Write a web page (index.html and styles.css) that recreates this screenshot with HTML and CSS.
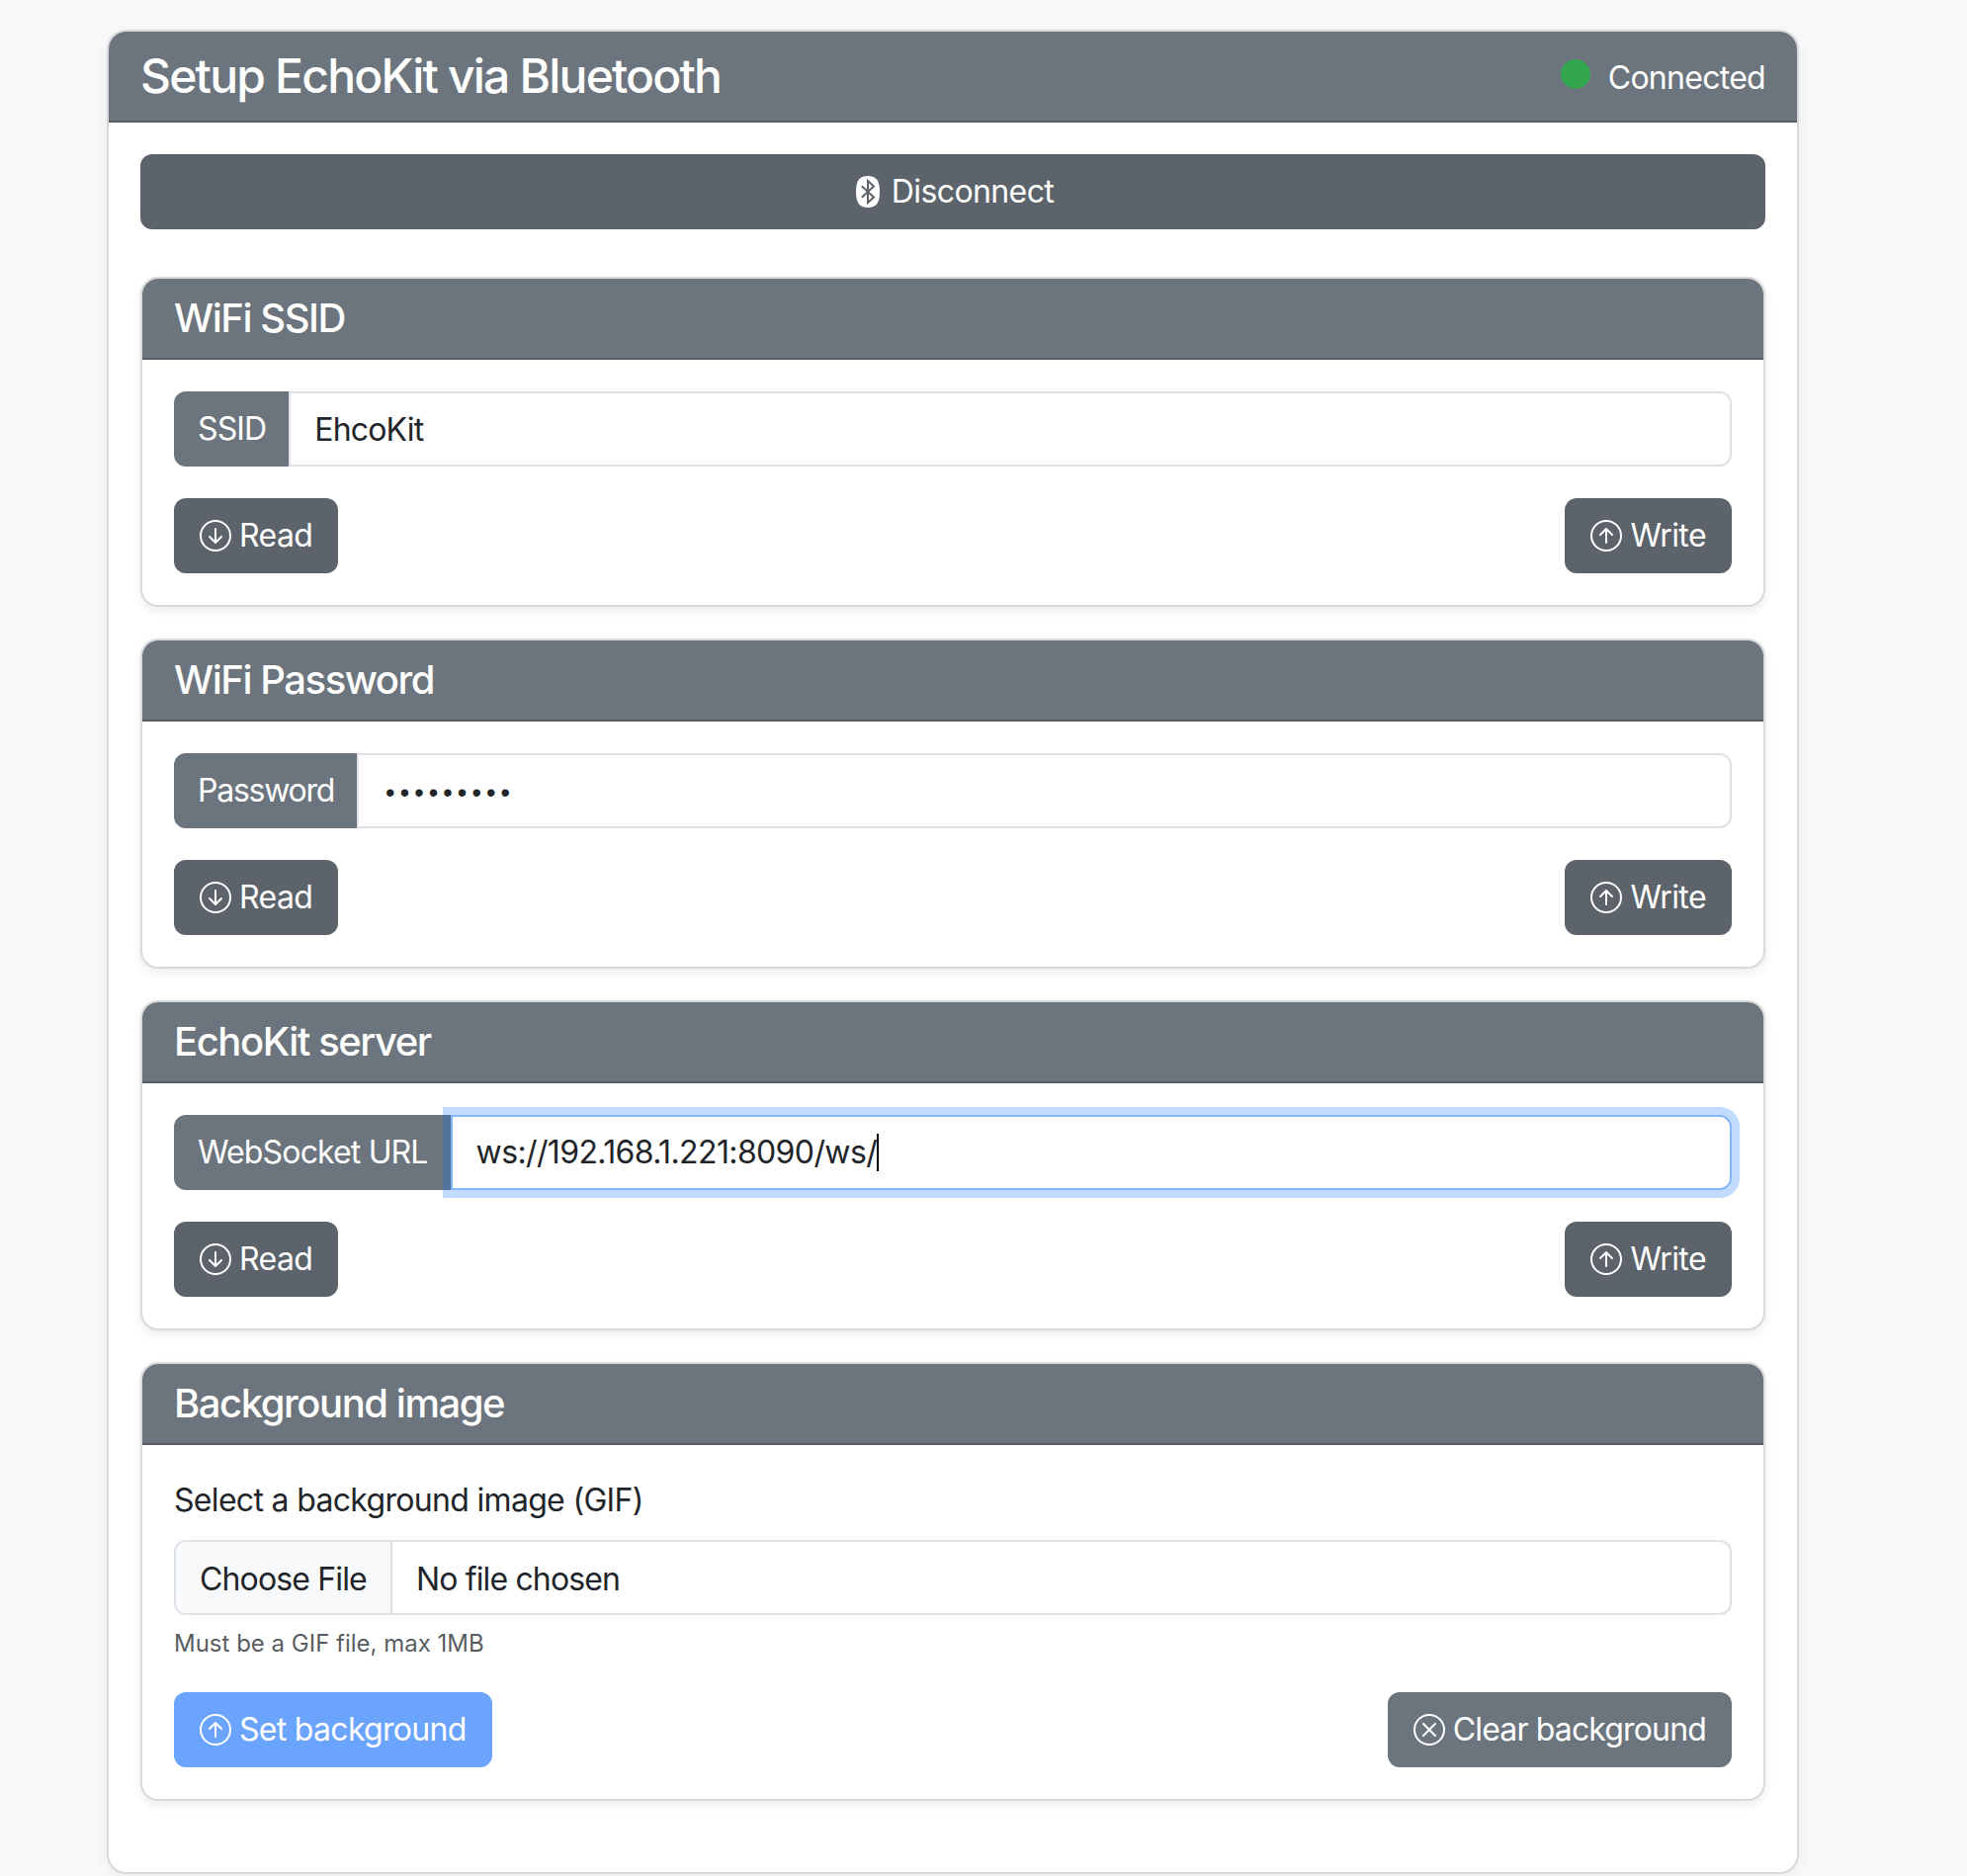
FILE: index.html
```html
<!DOCTYPE html>
<html lang="en">
<head>
<meta charset="utf-8">
<title>Setup EchoKit via Bluetooth</title>
<link rel="stylesheet" href="styles.css">
</head>
<body>
<main class="page">
  <section class="panel">
    <header class="panel-head">
      <h1 class="title">Setup EchoKit via Bluetooth</h1>
      <div class="status"><span class="dot"></span><span class="status-text">Connected</span></div>
    </header>
    <div class="panel-body">
      <button class="btn btn-dark btn-block" type="button">
        <svg class="icon bt" viewBox="0 0 16 16"><path class="bt-oval" d="M8 16c3.6 0 6-1.5 6-8S11.6 0 8 0 2 1.5 2 8s2.4 8 6 8"/><path class="bt-rune" d="M4.9 5.1 11 10.7 8 13.5V2.5L11 5.3 4.9 10.9"/></svg>Disconnect
      </button>

      <section class="card">
        <h2 class="card-head">WiFi SSID</h2>
        <div class="card-body">
          <div class="group">
            <span class="addon">SSID</span>
            <input class="control" type="text" value="EhcoKit">
          </div>
          <div class="actions">
            <button class="btn btn-dark" type="button"><svg class="icon" viewBox="0 0 16 16"><path fill-rule="evenodd" d="M1 8a7 7 0 1 0 14 0A7 7 0 0 0 1 8m15 0A8 8 0 1 1 0 8a8 8 0 0 1 16 0M8.5 4.5a.5.5 0 0 0-1 0v5.793L5.354 8.146a.5.5 0 1 0-.708.708l3 3a.5.5 0 0 0 .708 0l3-3a.5.5 0 0 0-.708-.708L8.5 10.293z"/></svg>Read</button>
            <button class="btn btn-dark" type="button"><svg class="icon" viewBox="0 0 16 16"><path fill-rule="evenodd" d="M1 8a7 7 0 1 0 14 0A7 7 0 0 0 1 8m15 0A8 8 0 1 1 0 8a8 8 0 0 1 16 0m-7.5 3.5a.5.5 0 0 1-1 0V5.707L5.354 7.854a.5.5 0 1 1-.708-.708l3-3a.5.5 0 0 1 .708 0l3 3a.5.5 0 0 1-.708.708L8.5 5.707z"/></svg>Write</button>
          </div>
        </div>
      </section>

      <section class="card">
        <h2 class="card-head">WiFi Password</h2>
        <div class="card-body">
          <div class="group">
            <span class="addon addon-tight">Password</span>
            <input class="control control-secret" type="password" value="echokit12">
          </div>
          <div class="actions">
            <button class="btn btn-dark" type="button"><svg class="icon" viewBox="0 0 16 16"><path fill-rule="evenodd" d="M1 8a7 7 0 1 0 14 0A7 7 0 0 0 1 8m15 0A8 8 0 1 1 0 8a8 8 0 0 1 16 0M8.5 4.5a.5.5 0 0 0-1 0v5.793L5.354 8.146a.5.5 0 1 0-.708.708l3 3a.5.5 0 0 0 .708 0l3-3a.5.5 0 0 0-.708-.708L8.5 10.293z"/></svg>Read</button>
            <button class="btn btn-dark" type="button"><svg class="icon" viewBox="0 0 16 16"><path fill-rule="evenodd" d="M1 8a7 7 0 1 0 14 0A7 7 0 0 0 1 8m15 0A8 8 0 1 1 0 8a8 8 0 0 1 16 0m-7.5 3.5a.5.5 0 0 1-1 0V5.707L5.354 7.854a.5.5 0 1 1-.708-.708l3-3a.5.5 0 0 1 .708 0l3 3a.5.5 0 0 1-.708.708L8.5 5.707z"/></svg>Write</button>
          </div>
        </div>
      </section>

      <section class="card">
        <h2 class="card-head">EchoKit server</h2>
        <div class="card-body">
          <div class="group">
            <span class="addon">WebSocket URL</span>
            <div class="control control-focus">ws://192.168.1.221:8090/ws/<span class="caret"></span></div>
          </div>
          <div class="actions">
            <button class="btn btn-dark" type="button"><svg class="icon" viewBox="0 0 16 16"><path fill-rule="evenodd" d="M1 8a7 7 0 1 0 14 0A7 7 0 0 0 1 8m15 0A8 8 0 1 1 0 8a8 8 0 0 1 16 0M8.5 4.5a.5.5 0 0 0-1 0v5.793L5.354 8.146a.5.5 0 1 0-.708.708l3 3a.5.5 0 0 0 .708 0l3-3a.5.5 0 0 0-.708-.708L8.5 10.293z"/></svg>Read</button>
            <button class="btn btn-dark" type="button"><svg class="icon" viewBox="0 0 16 16"><path fill-rule="evenodd" d="M1 8a7 7 0 1 0 14 0A7 7 0 0 0 1 8m15 0A8 8 0 1 1 0 8a8 8 0 0 1 16 0m-7.5 3.5a.5.5 0 0 1-1 0V5.707L5.354 7.854a.5.5 0 1 1-.708-.708l3-3a.5.5 0 0 1 .708 0l3 3a.5.5 0 0 1-.708.708L8.5 5.707z"/></svg>Write</button>
          </div>
        </div>
      </section>

      <section class="card">
        <h2 class="card-head">Background image</h2>
        <div class="card-body">
          <label class="field-label" for="bg">Select a background image (GIF)</label>
          <input class="file" id="bg" type="file">
          <p class="hint">Must be a GIF file, max 1MB</p>
          <div class="actions">
            <button class="btn btn-blue" type="button"><svg class="icon" viewBox="0 0 16 16"><path fill-rule="evenodd" d="M1 8a7 7 0 1 0 14 0A7 7 0 0 0 1 8m15 0A8 8 0 1 1 0 8a8 8 0 0 1 16 0m-7.5 3.5a.5.5 0 0 1-1 0V5.707L5.354 7.854a.5.5 0 1 1-.708-.708l3-3a.5.5 0 0 1 .708 0l3 3a.5.5 0 0 1-.708.708L8.5 5.707z"/></svg>Set background</button>
            <button class="btn btn-grey" type="button"><svg class="icon" viewBox="0 0 16 16"><path d="M8 15A7 7 0 1 1 8 1a7 7 0 0 1 0 14m0 1A8 8 0 1 0 8 0a8 8 0 0 0 0 16"/><path d="M4.646 4.646a.5.5 0 0 1 .708 0L8 7.293l2.646-2.647a.5.5 0 0 1 .708.708L8.707 8l2.647 2.646a.5.5 0 0 1-.708.708L8 8.707l-2.646 2.647a.5.5 0 0 1-.708-.708L7.293 8 4.646 5.354a.5.5 0 0 1 0-.708"/></svg>Clear background</button>
          </div>
        </div>
      </section>
    </div>
  </section>
</main>
</body>
</html>
```
FILE: styles.css
```css
* { box-sizing: border-box; }
html, body { margin: 0; padding: 0; }
body {
  background: #f8f9fa;
  color: #212529;
  font-family: Inter, "Noto Sans", "Liberation Sans", sans-serif;
  font-size: 32px;
  font-weight: 430;
  line-height: 48px;
  letter-spacing: -.85px;
  height: 1898px;
  overflow: hidden;
}
.page { padding: 30px 0 0 108px; }
.panel {
  width: 1712px;
  background: #fff;
  border: 2px solid rgba(0,0,0,.15);
  border-radius: 20px;
  box-shadow: 0 4px 16px rgba(0,0,0,.06);
  overflow: hidden;
}
.panel-head {
  display: flex;
  justify-content: space-between;
  align-items: center;
  background: #6c757d;
  color: #fff;
  padding: 16px 32px;
  border-bottom: 2px solid #565e64;
}
.title { margin: 0; font-size: 48px; line-height: 58px; font-weight: 550; letter-spacing: -1.8px; }
.status { display: flex; align-items: center; letter-spacing: -.72px; }
.status-text { padding-top: 4px; }
.dot { width: 30px; height: 30px; border-radius: 50%; background: #33a650; margin-right: 18px; position: relative; top: -2px; }
.panel-body { padding: 32px 32px 40px; }

.btn {
  display: inline-flex;
  align-items: center;
  justify-content: center;
  height: 76px;
  padding: 12px 24px;
  border: 2px solid transparent;
  border-radius: 12px;
  color: #fff;
  font: inherit;
  letter-spacing: inherit;
  white-space: nowrap;
}
.btn-dark { background: #5c636a; letter-spacing: -.6px; }
.btn-grey { background: #6c757d; }
.btn-blue { background: #6aa4fe; letter-spacing: -.7px; }
.btn-block { display: flex; width: 100%; margin-bottom: 48px; }
.icon { width: 32px; height: 32px; margin-right: 8px; fill: currentColor; flex: none; }
.bt-oval { fill: #fff; }
.bt-rune { fill: none; stroke: #5c636a; stroke-width: 1; }

.card {
  background: #fff;
  border: 2px solid rgba(0,0,0,.15);
  border-radius: 18px;
  box-shadow: 0 4px 10px rgba(0,0,0,.08);
  margin-bottom: 32px;
  overflow: hidden;
}
.card-head {
  margin: 0;
  padding: 16px 32px;
  background: #6c757d;
  color: #fff;
  font-size: 40px;
  line-height: 48px;
  font-weight: 550;
  letter-spacing: -1.45px;
  border-bottom: 2px solid #565e64;
}
.card-body { padding: 32px; }

.group { display: flex; margin-bottom: 32px; }
.addon {
  display: flex;
  align-items: center;
  padding: 12px 23px 12px 22px;
  height: 76px;
  background: #6c757d;
  color: #fff;
  border: 2px solid #6c757d;
  border-radius: 12px 0 0 12px;
  white-space: nowrap;
}
.addon-tight { letter-spacing: -1.25px; }
.control {
  flex: 1;
  min-width: 0;
  height: 76px;
  margin-left: -2px;
  padding: 12px 24px;
  border: 2px solid #dee2e6;
  border-radius: 0 12px 12px 0;
  background: #fff;
  color: #212529;
  font: inherit;
  letter-spacing: inherit;
  outline: none;
}
.control-secret { font-family: "Liberation Sans", sans-serif; font-size: 27px; letter-spacing: 5.1px; padding: 14px 24px 10px 27px; }
.control-focus {
  position: relative;
  z-index: 1;
  border-color: #86b7fe;
  box-shadow: 0 0 0 8px rgba(13,110,253,.25);
  display: flex;
  align-items: center;
  letter-spacing: -.62px;
}
.caret { display: inline-block; width: 2px; height: 38px; background: #000; }
.actions { display: flex; justify-content: space-between; }

.field-label { display: block; margin-bottom: 16px; letter-spacing: -.68px; }
.file {
  display: block;
  width: 100%;
  height: 76px;
  padding: 12px 24px;
  border: 2px solid #dee2e6;
  border-radius: 12px;
  background: #fff;
  color: #212529;
  font: inherit;
  letter-spacing: inherit;
  overflow: hidden;
}
.file::file-selector-button {
  margin: -12px 24px -12px -24px;
  padding: 12px 24px;
  height: 76px;
  border: 0;
  border-right: 2px solid #dee2e6;
  border-radius: 0;
  background: #f8f9fa;
  color: #212529;
  font: inherit;
  letter-spacing: inherit;
}
.hint { margin: 11px 0 31px; font-size: 24px; font-weight: 400; line-height: 36px; letter-spacing: 0; color: rgba(33,37,41,.75); }
```
